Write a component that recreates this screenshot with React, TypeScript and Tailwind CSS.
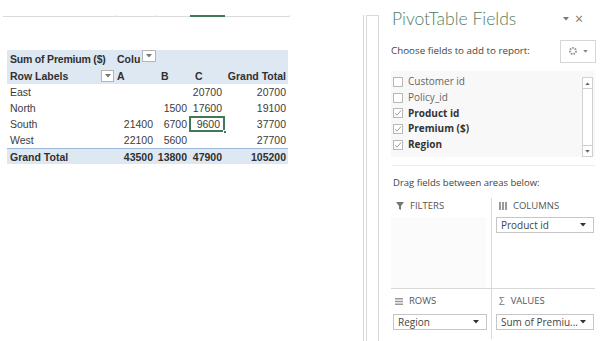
import React from "react";

const font = { fontFamily: '"Open Sans", "Liberation Sans", sans-serif' };

function Dd({ cls }: { cls: string }) {
  return (
    <div className={`absolute border border-[#b5b5b5] bg-white flex items-center justify-center ${cls}`}>
      <svg width="6" height="4" viewBox="0 0 6 4"><path d="M0 0h6L3 3.5z" fill="#777" /></svg>
    </div>
  );
}

function Check({ on }: { on: boolean }) {
  return (
    <div className="w-[10px] h-[10px] border border-[#b8b8b8] bg-white flex items-center justify-center">
      {on && (
        <svg width="8" height="8" viewBox="0 0 8 8"><path d="M1 4.2l2 2L7 1.5" stroke="#9a9a9a" strokeWidth="1" fill="none" /></svg>
      )}
    </div>
  );
}

function DropBox({ label, w }: { label: string; w: string }) {
  return (
    <div className={`h-[16px] ${w} border border-[#c6c6c6] bg-white flex items-center justify-between pl-[4px] pr-[7px] text-[10px] text-[#444]`}>
      <span>{label}</span>
      <svg width="6" height="4" viewBox="0 0 6 4"><path d="M0 0h6L3 3.5z" fill="#333" /></svg>
    </div>
  );
}

export default function App() {
  const rows = [
    ["East", "", "", "20700", "20700"],
    ["North", "", "1500", "17600", "19100"],
    ["South", "21400", "6700", "9600", "37700"],
    ["West", "22100", "5600", "", "27700"],
  ];
  const fields: [string, boolean][] = [
    ["Customer id", false],
    ["Policy_id", false],
    ["Product id", true],
    ["Premium ($)", true],
    ["Region", true],
  ];
  return (
    <div className="w-[601px] h-[341px] bg-white flex overflow-hidden text-[#333]" style={font}>
      {/* sheet area */}
      <div className="w-[363px] shrink-0 pt-[16px]">
        <div className="relative ml-[3px] w-[287px] h-px bg-[#dadada]">
          <div className="absolute left-[187px] top-[-1px] w-[35px] h-[2px] bg-[#3f7a55]" />
          <div className="absolute left-[112px] top-[-1px] w-px h-[2px] bg-[#e2e2e2]" />
          <div className="absolute left-[152px] top-[-1px] w-px h-[2px] bg-[#e2e2e2]" />
          <div className="absolute left-[286px] top-[-1px] w-px h-[2px] bg-[#e2e2e2]" />
        </div>
        <div className="ml-[7px] mt-[33px] w-[281px] text-[10.5px] leading-[16px] text-[#3c3c3c]" style={{ fontFamily: '"Liberation Sans", sans-serif' }}>
          <div className="bg-[#dde8f3] font-bold text-[#303030] relative">
            <div className="flex h-[17px] items-end">
              <div className="w-[108px] pl-[3px] tracking-[-0.2px]">Sum of Premium ($)</div>
              <div className="pl-[2px]">Colu</div>
            </div>
            <div className="flex h-[17px] items-center">
              <div className="w-[108px] pl-[3px]">Row Labels</div>
              <div className="w-[40px] pl-[2px]">A</div>
              <div className="w-[36px] pl-[6px]">B</div>
              <div className="w-[36px] pl-[4px]">C</div>
              <div className="flex-1 text-right pr-[2px]">Grand Total</div>
            </div>
            <Dd cls="left-[135px] top-[0px] w-[14px] h-[12px]" />
            <Dd cls="left-[94px] top-[20px] w-[13px] h-[12px]" />
          </div>
          {rows.map((r) => (
            <div key={r[0]} className="flex h-[16px] items-center">
              <div className="w-[108px] pl-[3px]">{r[0]}</div>
              <div className="w-[40px] text-right pr-[2px]">{r[1]}</div>
              <div className="w-[34px] text-right pr-[2px]">{r[2]}</div>
              <div className={`w-[36px] h-[16px] text-right pr-[3px] relative ${r[0] === "South" ? "border-2 border-[#3f7a55]" : ""}`}>
                <span className={r[0] === "South" ? "relative top-[-2px]" : ""}>{r[3]}</span>
                {r[0] === "South" && <div className="absolute right-[-4px] bottom-[-4px] w-[4px] h-[4px] bg-[#3f7a55] border border-white" />}
              </div>
              <div className="flex-1 text-right pr-[2px]">{r[4]}</div>
            </div>
          ))}
          <div className="flex h-[16px] items-center bg-[#dde8f3] border-t border-[#9bbad9] font-bold text-[#303030]">
            <div className="w-[108px] pl-[3px]">Grand Total</div>
            <div className="w-[40px] text-right pr-[2px]">43500</div>
            <div className="w-[34px] text-right pr-[2px]">13800</div>
            <div className="w-[36px] text-right pr-[3px]">47900</div>
            <div className="flex-1 text-right pr-[2px]">105200</div>
          </div>
        </div>
      </div>
      {/* pane splitter */}
      <div className="w-[16px] shrink-0 mt-[15px] border-l border-[#d6d6d6] flex">
        <div className="w-[2px]" />
        <div className="flex-1 border-l border-t border-r border-[#d9d9d9]" />
      </div>
      {/* Field panel */}
      <div className="flex-1 bg-white pl-[13px] pr-[4px] relative">
        <div className="flex items-center justify-between pt-[6px] h-[32px]">
          <div className="text-[17.5px] font-light text-[#4f7d63]" style={{ fontFamily: 'Lato, "Open Sans", sans-serif' }}>PivotTable Fields</div>
          <div className="flex items-center gap-[6px] pr-[14px] text-[#777]">
            <svg width="6" height="4" viewBox="0 0 6 4"><path d="M0 0h6L3 3.5z" fill="#777" /></svg>
            <span className="text-[14px] leading-none">×</span>
          </div>
        </div>
        <div className="flex items-center justify-between mt-[8px] h-[22px] -ml-px">
          <div className="text-[9.8px] text-[#444]">Choose fields to add to report:</div>
          <div className="w-[36px] h-[23px] border border-[#d6d6d6] flex items-center justify-center gap-[5px] text-[#888] mr-[1px]">
            <svg width="10" height="10" viewBox="0 0 10 10"><circle cx="5" cy="5" r="3" fill="none" stroke="#999" strokeWidth="2" strokeDasharray="1.6 1" /><circle cx="5" cy="5" r="1.2" fill="#fff" /></svg>
            <svg width="5" height="3" viewBox="0 0 6 4"><path d="M0 0h6L3 3.5z" fill="#888" /></svg>
          </div>
        </div>
        <div className="mt-[9px] h-[86px] bg-[#f8f8f8] flex pl-[2px] pt-[3px] mr-[2px] -ml-px">
          <div className="flex-1 flex flex-col">
            {fields.map(([f, on]) => (
              <div key={f} className="flex items-center gap-[5px] h-[15.7px]">
                <Check on={on} />
                <span className={`text-[10px] ${on ? "font-bold text-[#333]" : "text-[#666]"}`}>{f}</span>
              </div>
            ))}
          </div>
          <div className="w-[11px] mr-[2px] mt-[3px] h-[80px] flex flex-col border border-[#d0d0d0] bg-white">
            <div className="h-[10px] flex items-center justify-center"><svg width="5" height="3" viewBox="0 0 6 4"><path d="M0 4h6L3 0.5z" fill="#666" /></svg></div>
            <div className="flex-1 border-y border-[#cfcfcf] bg-white" />
            <div className="h-[10px] flex items-center justify-center"><svg width="5" height="3" viewBox="0 0 6 4"><path d="M0 0h6L3 3.5z" fill="#666" /></svg></div>
          </div>
        </div>
        <div className="h-px bg-[#ececec] mt-[8px] mr-[2px]" />
        <div className="text-[9.5px] text-[#444] mt-[10px] pl-[1px]">Drag fields between areas below:</div>
        <div className="mt-[8px] grid grid-cols-[101px_1fr] mr-[2px] -ml-px">
          <div className="border-r border-[#d8d8d8] h-[90px] flex flex-col">
            <div className="flex items-center gap-[6px] pl-[5px] h-[16px] text-[9.5px] text-[#555]">
              <svg width="8" height="8" viewBox="0 0 8 8"><path d="M0 0h8L5 4v4L3 7V4z" fill="#777" /></svg>
              FILTERS
            </div>
            <div className="mt-[3px] flex-1 bg-[#fbfbfb] mr-[5px]" />
          </div>
          <div className="h-[90px] pl-[4px]">
            <div className="flex items-center gap-[6px] pl-[3px] h-[16px] text-[9.5px] text-[#555]">
              <svg width="8" height="8" viewBox="0 0 8 8"><path d="M0 0h2v8H0zM3 0h2v8H3zM6 0h2v8H6z" fill="#999" /></svg>
              COLUMNS
            </div>
            <div className="mt-[3px]"><DropBox label="Product id" w="w-[98px]" /></div>
          </div>
          <div className="col-span-2 h-px bg-[#d8d8d8]" />
          <div className="border-r border-[#d8d8d8] h-[50px] pt-[4px]">
            <div className="flex items-center gap-[6px] pl-[4px] h-[16px] text-[9.5px] text-[#555]">
              <svg width="8" height="7" viewBox="0 0 8 7"><path d="M0 0h8v1.5H0zM0 2.7h8v1.5H0zM0 5.4h8v1.5H0z" fill="#999" /></svg>
              ROWS
            </div>
            <div className="mt-[5px] pl-[2px]"><DropBox label="Region" w="w-[94px]" /></div>
          </div>
          <div className="h-[50px] pt-[4px] pl-[4px]">
            <div className="flex items-center gap-[6px] pl-[3px] h-[16px] text-[9.5px] text-[#555]">
              <span className="text-[10px] leading-none text-[#777]">Σ</span>
              VALUES
            </div>
            <div className="mt-[5px]"><DropBox label="Sum of Premiu..." w="w-[98px]" /></div>
          </div>
        </div>
      </div>
    </div>
  );
}
